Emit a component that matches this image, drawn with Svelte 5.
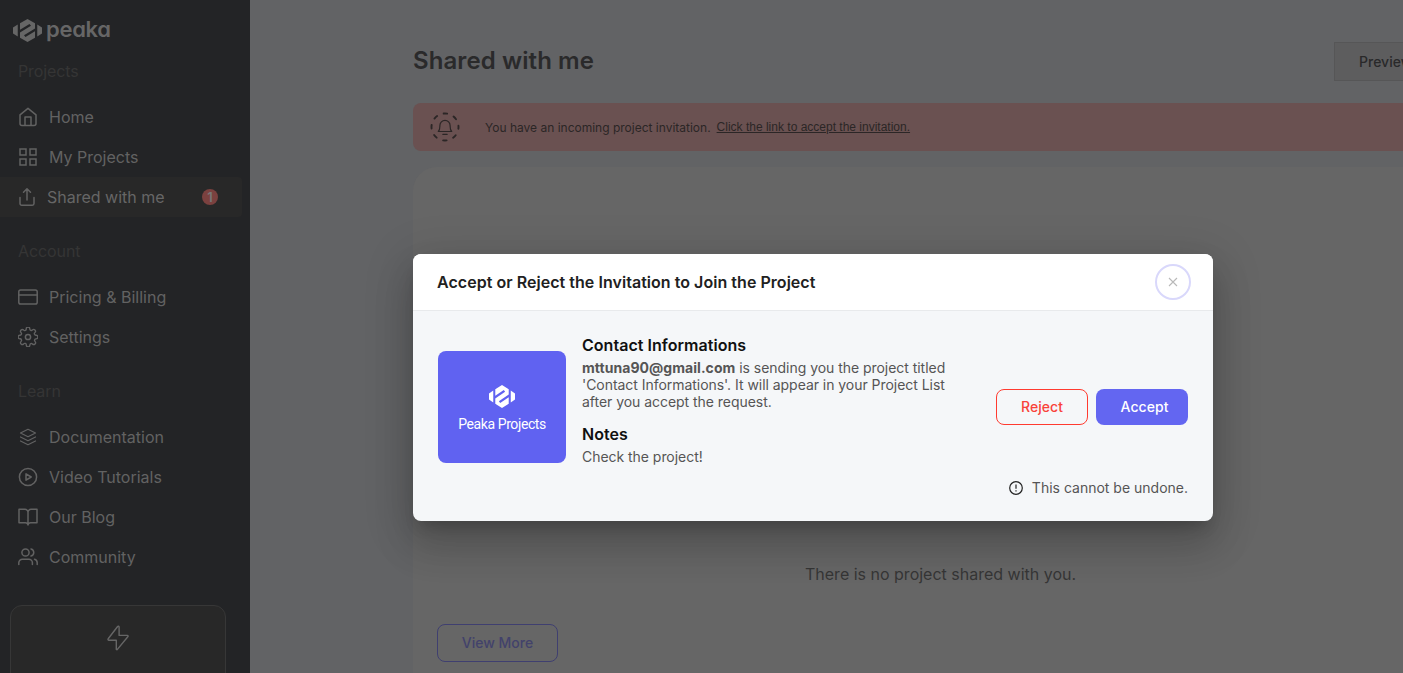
<script>
  const sections = [
    {
      title: 'Projects',
      items: [
        { label: 'Home', icon: 'home' },
        { label: 'My Projects', icon: 'grid' },
        { label: 'Shared with me', icon: 'share', active: true, badge: 1 }
      ]
    },
    {
      title: 'Account',
      items: [
        { label: 'Pricing & Billing', icon: 'card' },
        { label: 'Settings', icon: 'gear' }
      ]
    },
    {
      title: 'Learn',
      items: [
        { label: 'Documentation', icon: 'layers' },
        { label: 'Video Tutorials', icon: 'play' },
        { label: 'Our Blog', icon: 'book' },
        { label: 'Community', icon: 'users' }
      ]
    }
  ];
</script>

{#snippet mark(w, h)}
  <svg width={w} height={h} viewBox="0 0 58 46" preserveAspectRatio="none" fill="currentColor">
    <path d="M29 0 44 8.500V19L22 32.500 25 36 44 24.500V37.500L29 46 14 37.500V27L36 13.500 33 10 14 21.500V8.500Z" />
    <path d="M9.500 11V35L0 29V17Z" />
    <path d="M48.500 11V35L58 29V17Z" />
  </svg>
{/snippet}

{#snippet icon(name)}
  <svg class="icon" width="20" height="20" viewBox="0 0 20 20" fill="none" stroke="currentColor" stroke-width="1.500" stroke-linecap="round" stroke-linejoin="round">
    {#if name === 'home'}
      <path d="M2 7.800 10 1.300l8 6.500V16.500a2 2 0 0 1-2 2H4a2 2 0 0 1-2-2ZM7 18.300V10h6v8.300" />
    {:else if name === 'grid'}
      <path stroke-linejoin="miter" d="M2 2h6v6H2zM12 2h6v6h-6zM2 12h6v6H2zM12 12h6v6h-6z" />
    {:else if name === 'share'}
      <path d="M3 10.500v6a1.700 1.700 0 0 0 1.700 1.700h10.600a1.700 1.700 0 0 0 1.700-1.700v-6M10 13V2M6.500 5.300 10 1.800l3.500 3.500" />
    {:else if name === 'card'}
      <rect x="0.800" y="3" width="18.400" height="14" rx="1.800" />
      <path d="M.8 8h18.400" />
    {:else if name === 'gear'}
      <circle cx="10" cy="10" r="2.600" />
      <path transform="translate(-.8 -.8) scale(.9)" d="M19.400 15a1.650 1.650 0 0 0 .33 1.820l.06.06a2 2 0 0 1-2.830 2.830l-.06-.06a1.650 1.650 0 0 0-2.800 1.170V21a2 2 0 0 1-4 0v-.09a1.650 1.650 0 0 0-2.900-1.260l-.06.06a2 2 0 0 1-2.830-2.830l.06-.06A1.650 1.650 0 0 0 3.100 14H3a2 2 0 0 1 0-4h.09a1.650 1.650 0 0 0 1.260-2.800l-.06-.06a2 2 0 0 1 2.830-2.830l.06.06A1.650 1.650 0 0 0 10 3.100V3a2 2 0 0 1 4 0v.09a1.650 1.650 0 0 0 2.820 1.170l.06-.06a2 2 0 0 1 2.830 2.830l-.06.06A1.650 1.650 0 0 0 20.900 10H21a2 2 0 0 1 0 4h-.09a1.650 1.650 0 0 0-1.510 1z" />
    {:else if name === 'layers'}
      <path stroke-width="1.200" d="M10 2.300 17.500 6 10 9.700 2.500 6ZM2.500 10 10 13.700 17.500 10M2.500 14 10 17.700l7.500-3.700" />
    {:else if name === 'play'}
      <circle cx="10" cy="10" r="8.600" />
      <path d="M8 6.800v6.400l5.200-3.200Z" />
    {:else if name === 'book'}
      <path d="M1 2.300h6a3 3 0 0 1 3 3V18a2.600 2.600 0 0 0-2.600-2.200H1ZM19 2.300h-6a3 3 0 0 0-3 3V18a2.600 2.600 0 0 1 2.600-2.200H19Z" />
    {:else if name === 'users'}
      <circle cx="7.500" cy="5.500" r="3.600" />
      <path d="M.8 17.500v-1.700a3.600 3.600 0 0 1 3.600-3.600h6.400a3.600 3.600 0 0 1 3.600 3.600v1.700M13 2a3.600 3.600 0 0 1 0 7M19.200 17.500v-1.700a3.600 3.600 0 0 0-2.700-3.500" />
    {/if}
  </svg>
{/snippet}

<div class="page">
  <aside>
    <div class="brand">{@render mark(29, 23)}<span>peaka</span></div>
    {#each sections as s}
      <section>
        <h2>{s.title}</h2>
        <nav>
          {#each s.items as item}
            <div class="item" class:active={item.active}>
              {@render icon(item.icon)}
              <span class="label">{item.label}</span>
              {#if item.badge}<span class="badge">{item.badge}</span>{/if}
            </div>
          {/each}
        </nav>
      </section>
    {/each}
    <div class="promo">
      <svg width="22" height="26" viewBox="0 0 22 26" fill="none" stroke="currentColor" stroke-width="1.400" stroke-linejoin="round">
        <path d="M10.600 1.500 1.200 13.700a.9.900 0 0 0 .7 1.500H9.300V24a.6.600 0 0 0 1.100.4L20.800 11.800a.8.800 0 0 0-.6-1.400H12.100V2a.85.850 0 0 0-1.500-.5Z" />
      </svg>
    </div>
  </aside>

  <main>
    <header>
      <h1>Shared with me</h1>
      <button class="preview">Preview</button>
    </header>
    <div class="banner">
      <svg width="30" height="30" viewBox="0 0 30 30" fill="none" stroke="currentColor" stroke-linecap="round">
        <circle cx="15" cy="15" r="13.500" stroke-width="1.900" stroke-dasharray="3.600 7.003" stroke-dashoffset="1.800" />
        <path stroke-width="1.200" stroke-linejoin="round" d="M8.300 19.500c1.700-1.700 1.600-3 1.600-6a5.100 5.100 0 0 1 10.200 0c0 3-.1 4.300 1.600 6ZM12.800 22.300h4.400" />
      </svg>
      <span class="msg">You have an incoming project invitation.</span>
      <span class="link">Click the link to accept the invitation.</span>
    </div>
    <div class="panel">
      <p>There is no project shared with you.</p>
      <button class="more">View More</button>
    </div>
  </main>

  <div class="dialog">
    <div class="dhead">
      <h3>Accept or Reject the Invitation to Join the Project</h3>
      <div class="close">
        <svg width="10" height="10" viewBox="0 0 10 10" stroke="#b9b9b9" stroke-width="1.100"><path d="M1 1 9 9M9 1 1 9" /></svg>
      </div>
    </div>
    <div class="dbody">
      <div class="row">
        <div class="thumb">{@render mark(26, 23)}<span>Peaka Projects</span></div>
        <div class="info">
          <h4>Contact Informations</h4>
          <p><b>mttuna90@gmail.com</b> is sending you the project titled<br />'Contact Informations'. It will appear in your Project List<br />after you accept the request.</p>
          <h4 class="notes">Notes</h4>
          <p>Check the project!</p>
        </div>
        <div class="actions">
          <button class="reject">Reject</button>
          <button class="accept">Accept</button>
        </div>
      </div>
      <div class="warn">
        <svg width="14" height="14" viewBox="0 0 14 14" fill="none" stroke="#222" stroke-width="1.200"><circle cx="7" cy="7" r="6.300" /><path d="M7 3.500v4.200M7 9.200v1.300" /></svg>
        <span>This cannot be undone.</span>
      </div>
    </div>
  </div>
</div>

<style>
  :global(body) { margin: 0; overflow: hidden; }
  * { box-sizing: border-box; }
  h1, h2, h3, h4, p { margin: 0; }
  button { font: inherit; padding: 0; }
  svg { display: block; flex: none; }
  .page { position: relative; display: flex; width: 1403px; height: 673px; overflow: hidden; background: #626365; font-family: Inter, sans-serif; }
  aside { width: 250px; flex: none; height: 673px; overflow: hidden; background: #232426; color: #626262; display: flex; flex-direction: column; }
  .brand { height: 51px; flex: none; display: flex; padding: 19px 0 0 13px; gap: 4px; color: #666; }
  .brand span { font-size: 22px; line-height: 21px; font-weight: 600; font-feature-settings: 'cv11'; letter-spacing: -0.300px; }
  section { flex: none; margin-bottom: 14px; }
  h2 { height: 40px; line-height: 40px; padding-left: 18px; margin-bottom: 6px; font-size: 16px; font-weight: 400; letter-spacing: -0.100px; color: #353535; }
  .item { display: flex; align-items: center; height: 40px; width: 242px; padding-left: 18px; font-size: 16px; letter-spacing: 0; }
  .label { margin-left: 11px; }
  .item.active { background: #282828; border-radius: 0 4px 4px 0; padding-left: 17px; }
  .active .label { margin-left: 10px; color: #666; }
  .badge { margin-left: auto; margin-right: 24px; width: 16px; height: 16px; border-radius: 50%; background: #7b413f; color: #777; font-size: 13px; font-weight: 600; line-height: 16px; text-align: center; }
  .promo { margin: 14px 0 0 10px; width: 216px; height: 120px; flex: none; border: 1px solid #373737; border-radius: 12px; background: #282828; display: flex; justify-content: center; padding-top: 19px; color: #666; }
  main { flex: none; width: 1320px; padding: 42px 0 0 163px; }
  header { display: flex; height: 39px; margin-bottom: 22px; }
  h1 { width: 921px; line-height: 37px; font-size: 24px; font-weight: 600; letter-spacing: 0.090px; color: #2a2a2b; }
  .preview { width: 130px; height: 39px; text-align: left; padding-left: 24px; font-size: 14px; font-weight: 500; letter-spacing: 0; color: #29292a; background: #5d5d5e; border: 1px solid #565657; }
  .banner { height: 48px; border-radius: 8px; background: #6a5151; color: #2b2626; display: flex; align-items: center; padding-left: 17px; font-size: 12px; }
  .msg { margin-left: 25px; letter-spacing: 0; padding-top: 1px; }
  .link { margin-left: 6px; font-family: 'Liberation Sans', Arial, sans-serif; text-decoration: underline; }
  .panel { margin-top: 16px; height: 530px; border-radius: 24px; background: #666; padding: 395px 0 0 24px; }
  .panel p { padding-left: 368px; line-height: 24px; font-size: 16px; letter-spacing: 0; color: #363636; }
  .more { display: block; margin-top: 38px; width: 121px; height: 38px; border: 1px solid #3f3f70; border-radius: 8px; background: none; color: #42426b; font-size: 14px; font-weight: 500; letter-spacing: 0; padding-bottom: 2px; }
  .dialog { position: absolute; left: 413px; top: 254px; width: 800px; height: 267px; border-radius: 8px; overflow: hidden; background: #f5f7f9; box-shadow: 0 11px 15px -7px rgba(0,0,0,.2), 0 24px 38px 3px rgba(0,0,0,.14), 0 9px 46px 8px rgba(0,0,0,.12); }
  .dhead { height: 57px; background: #fff; border-bottom: 1px solid #e8eaec; display: flex; justify-content: space-between; align-items: center; padding: 0 22px 0 24px; }
  h3 { font-size: 16px; font-weight: 600; letter-spacing: 0.040px; color: #212121; }
  .close { width: 36px; height: 36px; border: 2px solid #d9d8fb; border-radius: 50%; display: flex; align-items: center; justify-content: center; }
  .dbody { padding: 24px 25px 0; }
  .row { display: flex; align-items: center; height: 144px; }
  .thumb { width: 128px; height: 112px; flex: none; border-radius: 8px; background: #6062f1; color: #fff; display: flex; flex-direction: column; align-items: center; padding-top: 34px; }
  .thumb span { margin-top: 8px; font-family: Roboto, sans-serif; font-size: 14px; line-height: 17px; letter-spacing: -0.400px; white-space: nowrap; }
  .info { align-self: flex-start; margin-left: 16px; flex: 1; white-space: nowrap; }
  h4 { font-size: 16px; line-height: 20px; font-weight: 600; letter-spacing: 0.040px; color: #101010; margin-bottom: 4px; }
  h4.notes { margin-top: 14px; }
  .info p { font-size: 14px; line-height: 17px; letter-spacing: -0.040px; color: #555; }
  .info b { letter-spacing: 0.050px; }
  .actions { display: flex; gap: 8px; }
  .actions button { width: 92px; height: 36px; border-radius: 8px; font-size: 14px; font-weight: 500; letter-spacing: 0.050px; }
  .actions .reject { border: 1px solid #ff3b30; background: none; color: #f9423a; padding: 0 0 2px; }
  .actions .accept { border: 0; background: #6366f1; color: #fff; padding: 0 0 2px 5px; }
  .warn { display: flex; justify-content: flex-end; align-items: center; gap: 9px; height: 17px; font-size: 14px; letter-spacing: 0; color: #555; }
</style>
